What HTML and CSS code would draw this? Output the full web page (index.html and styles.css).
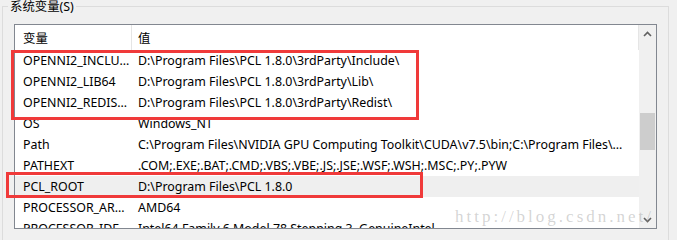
FILE: index.html
```html
<!DOCTYPE html>
<html lang="zh-CN">
<head>
    <meta charset="UTF-8">
    <title>系统变量</title>
    <link rel="stylesheet" href="styles.css">
</head>
<body>
    <fieldset class="group">
        <legend>系统变量(S)</legend>

        <div class="listbox">
            <div class="list">
                <div class="head">
                    <div class="c1">变量</div>
                    <div class="c2">值</div>
                </div>
                <div class="row"><div class="c1">OPENNI2_INCLUDE</div><div class="c2">D:\Program Files\PCL 1.8.0\3rdParty\Include\</div></div>
                <div class="row"><div class="c1">OPENNI2_LIB64</div><div class="c2">D:\Program Files\PCL 1.8.0\3rdParty\Lib\</div></div>
                <div class="row"><div class="c1">OPENNI2_REDIST64</div><div class="c2">D:\Program Files\PCL 1.8.0\3rdParty\Redist\</div></div>
                <div class="row"><div class="c1">OS</div><div class="c2">Windows_NT</div></div>
                <div class="row"><div class="c1">Path</div><div class="c2">C:\Program Files\NVIDIA GPU Computing Toolkit\CUDA\v7.5\bin;C:\Program Files\NVIDIA GPU Computing Toolkit\CUDA\v7.5\libnvvp</div></div>
                <div class="row"><div class="c1">PATHEXT</div><div class="c2">.COM;.EXE;.BAT;.CMD;.VBS;.VBE;.JS;.JSE;.WSF;.WSH;.MSC;.PY;.PYW</div></div>
                <div class="row selected"><div class="c1">PCL_ROOT</div><div class="c2">D:\Program Files\PCL 1.8.0</div></div>
                <div class="row"><div class="c1">PROCESSOR_ARCHITECTURE</div><div class="c2">AMD64</div></div>
                <div class="row"><div class="c1">PROCESSOR_IDENTIFIER</div><div class="c2">Intel64 Family 6 Model 78 Stepping 3, GenuineIntel</div></div>
            </div>

            <div class="scrollbar">
                <div class="arrow">
                    <svg width="9" height="6" viewBox="0 0 9 6"><path d="M1 5 L4.5 1.5 L8 5" fill="none" stroke="#606060" stroke-width="1.6"/></svg>
                </div>
                <div class="track">
                    <div class="thumb"></div>
                </div>
                <div class="arrow">
                    <svg width="9" height="6" viewBox="0 0 9 6"><path d="M1 1 L4.5 4.5 L8 1" fill="none" stroke="#606060" stroke-width="1.6"/></svg>
                </div>
            </div>
        </div>
    </fieldset>

    <!-- annotations -->
    <div class="mark mark-a"></div>
    <div class="mark mark-b"></div>
    <div class="watermark">http://blog.csdn.net/</div>
</body>
</html>
```

FILE: styles.css
```css
body {
    margin: 0;
    width: 677px;
    height: 240px;
    overflow: hidden;
    position: relative;
    background: #f0f0f0;
    font-family: "Noto Sans", "Noto Sans CJK SC", sans-serif;
    font-size: 12.4px;
    color: #000;
}

/* Cadre du groupe */
.group {
    margin: 0 0 0 2px;
    padding: 0;
    width: 667px;
    height: 260px;
    box-sizing: border-box;
    border: 1px solid #dcdcdc;
    position: relative;
    top: -2px;
}

    .group legend {
        padding: 2px 2px 0;
        margin-left: 5px;
        line-height: 14px;
        color: #000;
    }

/* Liste des variables */
.listbox {
    display: flex;
    margin: 10px 0 0 11px;
    width: 643px;
    height: 205px;
    box-sizing: border-box;
    border: 1px solid #828790;
    background: #fff;
}

.list {
    flex: 1;
    overflow: hidden;
}

.head {
    display: flex;
    height: 25px;
    align-items: center;
    border-right: 1px solid #e5e5e5;
    box-sizing: border-box;
}

    .head .c1 {
        align-self: stretch;
        display: flex;
        align-items: center;
        border-right: 1px solid #e5e5e5;
    }

.row {
    display: flex;
    height: 21px;
    align-items: center;
}

    .row.selected {
        background: #efefef;
    }

.c1 {
    width: 117px;
    box-sizing: border-box;
    padding: 0 1px 0 8px;
    white-space: nowrap;
    overflow: hidden;
    text-overflow: ellipsis;
}

.c2 {
    flex: 1;
    padding: 0 12px 0 6px;
    white-space: nowrap;
    overflow: hidden;
    text-overflow: ellipsis;
}

/* Barre de défilement */
.scrollbar {
    width: 17px;
    display: flex;
    flex-direction: column;
    background: #f0f0f0;
}

    .scrollbar .arrow {
        height: 17px;
        display: flex;
        align-items: center;
        justify-content: center;
    }

    .scrollbar .track {
        flex: 1;
        padding-top: 71px;
    }

    .scrollbar .thumb {
        margin: 0 1px;
        height: 37px;
        background: #cdcdcd;
    }

/* Cadres rouges et filigrane */
.mark {
    position: absolute;
    border: 3px solid #f03a3a;
    box-sizing: border-box;
}

.mark-a {
    left: 11px;
    top: 50px;
    width: 408px;
    height: 70px;
}

.mark-b {
    left: 6px;
    top: 172px;
    width: 417px;
    height: 26px;
}

.watermark {
    position: absolute;
    left: 455px;
    top: 207px;
    font-family: "Liberation Serif", serif;
    font-size: 17px;
    letter-spacing: 3px;
    color: rgba(160, 160, 160, 0.45);
}
```
